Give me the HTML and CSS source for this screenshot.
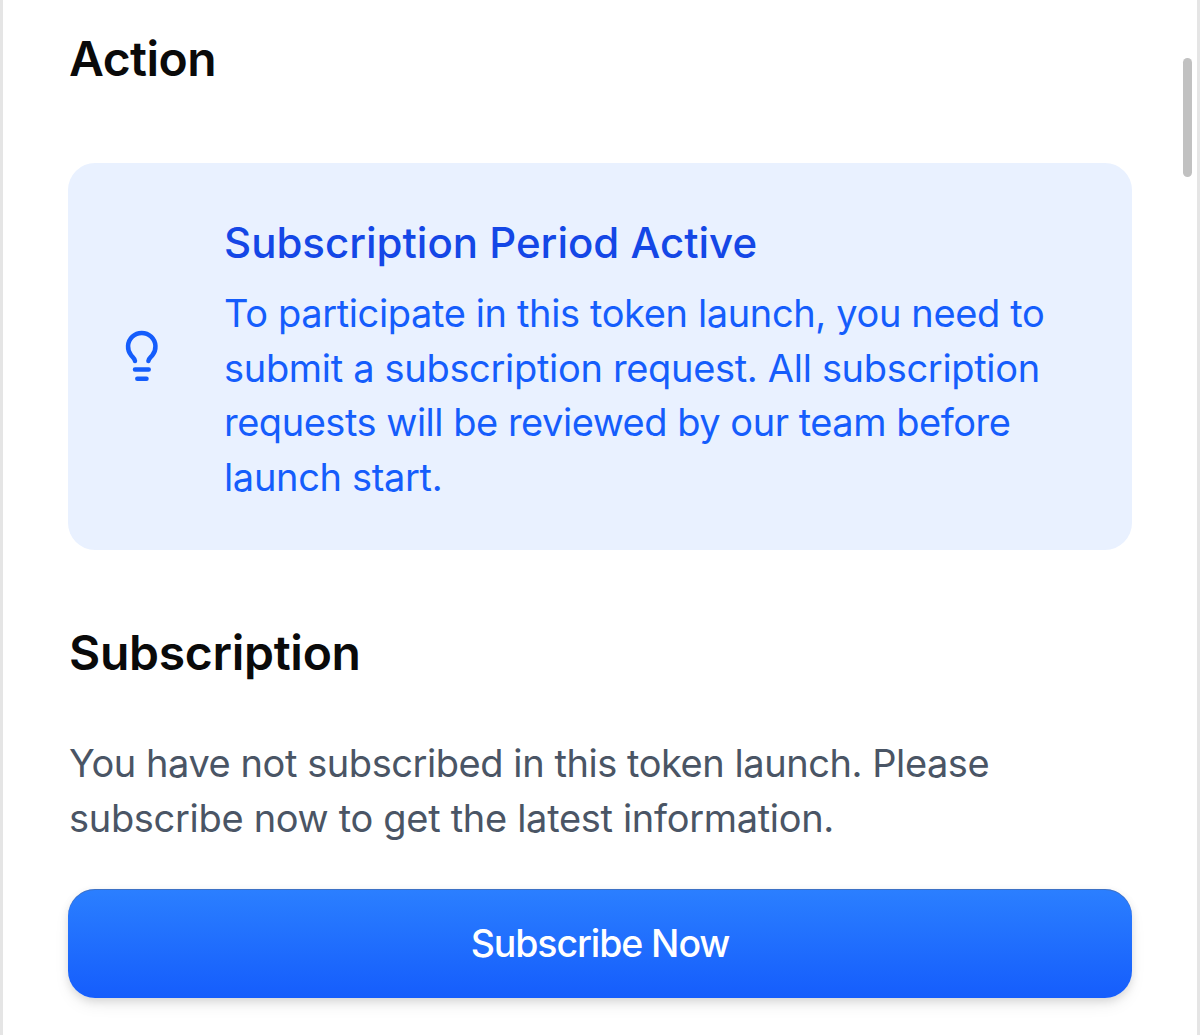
FILE: index.html
```html
<!DOCTYPE html>
<html lang="en">
<head>
<meta charset="utf-8">
<title>Token launch</title>
<link rel="stylesheet" href="styles.css">
</head>
<body>
<main class="panel">
  <h2 class="heading heading-action">Action</h2>
  <section class="notice">
    <svg class="bulb" viewBox="0 0 54 54" fill="none" stroke="currentColor" stroke-width="4.5" stroke-linecap="round" stroke-linejoin="round">
      <path d="M20 31C19.700 28.500 17.800 27.200 16.300 25.500A13.700 13.700 0 1 1 37.200 25.500C35.700 27.200 33.700 28.500 33.400 31"/>
      <path d="M20 39.500h13.700M22.300 48.700h9.200"/>
    </svg>
    <div class="notice-body">
      <h3 class="notice-title">Subscription Period Active</h3>
      <p class="notice-text"><span class="n1">To participate in this token launch, you need to</span><br><span class="n2">submit a subscription request. All subscription</span><br><span class="n3">requests will be reviewed by our team before</span><br><span class="n4">launch start.</span></p>
    </div>
  </section>
  <h2 class="heading heading-sub">Subscription</h2>
  <p class="copy"><span class="c1">You have not subscribed in this token launch. Please</span><br><span class="c2">subscribe now to get the latest information.</span></p>
  <button class="subscribe">Subscribe Now</button>
</main>
<div class="scroll-thumb"></div>
</body>
</html>
```
FILE: styles.css
```css
* { box-sizing: border-box; }
body { margin: 0; background: #fff; font-family: Inter, "Liberation Sans", sans-serif; }
h2, h3, p { margin: 0; }
.panel { height: 1035px; padding: 23px 65px 0 65px; border-left: 3px solid #e5e5e5; border-right: 3px solid #e5e5e5; overflow: hidden; }
.heading { height: 72px; padding-left: 1px; line-height: 72px; font-size: 48px; font-weight: 600; color: #0a0a0a; white-space: nowrap; }
.heading-action { letter-spacing: -.55px; }
.notice { display: flex; align-items: center; height: 387px; margin-top: 68px; padding-left: 47px; border-radius: 27px; background: #e9f1ff; color: #155dfc; }
.bulb { width: 54px; height: 54px; flex: none; }
.notice-body { margin-left: 55px; padding-top: 4px; white-space: nowrap; }
.notice-title { line-height: 60px; font-size: 42px; font-weight: 500; color: #1447e6; }
.notice-text { margin-top: 13px; line-height: 54.5px; font-size: 38px; }
.n1 { letter-spacing: -.37px; }
.n2 { letter-spacing: -.32px; }
.n3 { letter-spacing: -.48px; }
.n4 { letter-spacing: -.33px; }
.heading-sub { margin-top: 67px; letter-spacing: -.28px; }
.copy { margin-top: 47px; padding-left: 1px; line-height: 54.5px; font-size: 38px; color: #4a5565; white-space: nowrap; }
.c1 { letter-spacing: -.44px; }
.c2 { letter-spacing: -.31px; }
.subscribe { display: block; width: 100%; height: 109px; margin-top: 44px; padding: 0; border: 0; border-radius: 27px; background: linear-gradient(#2b7fff, #155dfc); box-shadow: 0 3px 8px rgba(0,0,0,.1), 0 8px 18px -4px rgba(0,0,0,.1), inset 0 1px 0 rgba(80,100,140,.5); color: #fff; font: 500 37.5px/109px Inter, "Liberation Sans", sans-serif; letter-spacing: -1.1px; }
.scroll-thumb { position: absolute; left: 1183px; top: 58px; width: 9px; height: 119px; border-radius: 5px; background: #c1c1c1; }
```
